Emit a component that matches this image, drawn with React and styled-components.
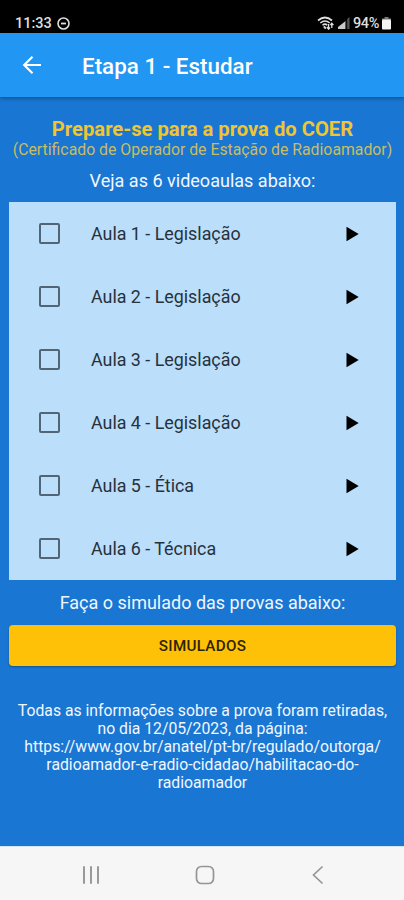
import React from "react";
import styled, { createGlobalStyle } from "styled-components";

const GlobalStyle = createGlobalStyle`
  * { box-sizing: border-box; }
  body { margin: 0; background: #1976d2; font-family: Roboto, "Liberation Sans", sans-serif; }
`;

const Screen = styled.div`
  width: 404px;
  height: 900px;
  display: flex;
  flex-direction: column;
  background: #1976d2;
  overflow: hidden;
`;

const StatusBar = styled.div`
  height: 33px;
  flex: none;
  background: #000;
  color: #dedede;
  display: flex;
  align-items: flex-end;
  justify-content: space-between;
  padding: 0 13px 2px 15px;
`;

const StatusGroup = styled.div`
  display: flex;
  align-items: center;
  height: 16px;
  gap: ${(p) => p.$gap}px;
`;

const StatusText = styled.span`
  font-size: 14.5px;
  font-weight: 500;
  line-height: 16px;
  padding-top: 2px;
  letter-spacing: ${(p) => p.$spacing || 0}px;
`;

const AppBar = styled.header`
  height: 64px;
  flex: none;
  background: #2196f3;
  color: #fff;
  display: flex;
  align-items: center;
  padding: 0 20px;
  gap: 38px;
  box-shadow: 0 1px 4px rgba(0, 0, 0, 0.4);
`;

const Title = styled.h1`
  margin: 0;
  padding-top: 2px;
  font-size: 22.4px;
  font-weight: 500;
  line-height: 26px;
`;

const Icon = styled.svg`
  display: block;
  flex: none;
`;

const Content = styled.main`
  flex: 1;
  display: flex;
  flex-direction: column;
  padding: 20px 8px 0 9px;
`;

const Line = styled.p`
  margin: 0;
  text-align: center;
  white-space: nowrap;
  color: ${(p) => p.$color || "#f1f7ff"};
  font-size: ${(p) => p.$size}px;
  font-weight: ${(p) => p.$weight || 400};
  line-height: ${(p) => p.$height}px;
`;

const LessonList = styled.ul`
  margin: 0;
  padding: 0;
  list-style: none;
  background: #bbdefb;
`;

const LessonRow = styled.li`
  height: 63px;
  display: flex;
  align-items: center;
  padding: 0 37px 0 30px;
`;

const Checkbox = styled.span`
  width: 21px;
  height: 21px;
  border: 2px solid #526576;
  border-radius: 2px;
  flex: none;
`;

const LessonName = styled.span`
  flex: 1;
  margin-left: 31px;
  color: #26323c;
  font-size: 17.85px;
  line-height: 22px;
`;

const Button = styled.button`
  height: 41px;
  flex: none;
  border: 0;
  border-radius: 4px;
  background: #ffc107;
  color: #2e2300;
  font: 500 15.2px/20px Roboto, sans-serif;
  letter-spacing: 0.3px;
  box-shadow: 0 1px 2px rgba(0, 0, 0, 0.3);
`;

const Note = styled.div`
  padding-top: 36px;
`;

const NavBar = styled.nav`
  height: 54px;
  flex: none;
  background: #f6f6f6;
  border-top: 1px solid #d4e4f3;
  display: flex;
  align-items: center;
  justify-content: space-between;
  padding: 3px 79px 0 81px;
`;

const lessons = [
  "Aula 1 - Legislação",
  "Aula 2 - Legislação",
  "Aula 3 - Legislação",
  "Aula 4 - Legislação",
  "Aula 5 - Ética",
  "Aula 6 - Técnica",
];

const noteLines = [
  "Todas as informações sobre a prova foram retiradas,",
  "no dia 12/05/2023, da página:",
  "https://www.gov.br/anatel/pt-br/regulado/outorga/",
  "radioamador-e-radio-cidadao/habilitacao-do-",
  "radioamador",
];

function DoNotDisturb() {
  return (
    <Icon width="13" height="13" viewBox="0 0 13 13" fill="none" stroke="#dedede">
      <circle cx="6.5" cy="6.5" r="5.5" strokeWidth="1.6" />
      <path d="M4 6.5h5" strokeWidth="1.8" />
    </Icon>
  );
}

function Wifi() {
  return (
    <Icon width="18" height="14" viewBox="0 0 18 14" fill="none" stroke="#dedede">
      <path d="M1 4.5Q8 -1.5 15 4.5" strokeWidth="1.7" />
      <path d="M3.3 7Q8 3 12.7 7" strokeWidth="1.6" />
      <path d="M5.5 9.2Q8 7 10.3 9.2" strokeWidth="1.5" />
      <path d="M6.8 10.3L8.8 12.7" strokeWidth="1.8" />
      <path d="M11.6 13.2V8M9.9 11L11.6 13.2L13 11.5M14.8 7.5v4.5M13.4 9L14.8 7.3L16.4 9" strokeWidth="1.3" />
    </Icon>
  );
}

function Signal() {
  return (
    <Icon width="12" height="12" viewBox="0 0 12 12">
      <path d="M0 12V10L7 4.5V12Z" fill="#c9c9c9" />
      <path d="M7 12V4.5L8.2 3.5V12ZM9.2 12V2L11.5 0V12Z" fill="#555" />
    </Icon>
  );
}

function Battery() {
  return (
    <Icon width="9" height="13" viewBox="0 0 9 13">
      <path d="M2.5 0H6.5V1.5H9V3H0V1.5H2.5Z" fill="#777" />
      <rect y="2.5" width="9" height="10" rx="1" fill="#f4f4f4" />
    </Icon>
  );
}

export default function App() {
  return (
    <Screen>
      <GlobalStyle />
      <StatusBar>
        <StatusGroup $gap={5}>
          <StatusText>11:33</StatusText>
          <DoNotDisturb />
        </StatusGroup>
        <StatusGroup $gap={3}>
          <Wifi />
          <Signal />
          <StatusText $spacing={-0.4}>94%</StatusText>
          <Battery />
        </StatusGroup>
      </StatusBar>
      <AppBar>
        <Icon width="24" height="24" viewBox="0 0 24 24" fill="none" stroke="#fff" strokeWidth="2.2">
          <path d="M21 12H4.5M12.5 3.8L4.2 12L12.5 20.2" />
        </Icon>
        <Title>Etapa 1 - Estudar</Title>
      </AppBar>
      <Content>
        <Line $size={20.2} $height={24} $weight={700} $color="#f0c534">Prepare-se para a prova do COER</Line>
        <Line $size={15.8} $height={18} $color="#c9bd62">(Certificado de Operador de Estação de Radioamador)</Line>
        <Line $size={18.05} $height={43}>Veja as 6 videoaulas abaixo:</Line>
        <LessonList>
          {lessons.map((lesson) => (
            <LessonRow key={lesson}>
              <Checkbox />
              <LessonName>{lesson}</LessonName>
              <Icon width="13" height="16" viewBox="0 0 13 16">
                <path d="M0.5 0.7L12.7 8L0.5 15.3Z" fill="#000" />
              </Icon>
            </LessonRow>
          ))}
        </LessonList>
        <Line $size={18} $height={45}>Faça o simulado das provas abaixo:</Line>
        <Button>SIMULADOS</Button>
        <Note>
          {noteLines.map((line) => (
            <Line key={line} $size={15.75} $height={18}>{line}</Line>
          ))}
        </Note>
      </Content>
      <NavBar>
        <Icon width="19" height="20" viewBox="0 0 19 20" stroke="#959595" strokeWidth="1.9" strokeLinecap="round">
          <path d="M3 2V18M10 2V18M17 2V18" />
        </Icon>
        <Icon width="20" height="20" viewBox="0 0 20 20" fill="none" stroke="#959595" strokeWidth="1.7">
          <rect x="1.5" y="1.5" width="17" height="17" rx="5" />
        </Icon>
        <Icon width="16" height="20" viewBox="0 0 16 20" fill="none" stroke="#959595" strokeWidth="1.7" strokeLinecap="round">
          <path d="M13 2L4.5 10L13 18" />
        </Icon>
      </NavBar>
    </Screen>
  );
}
